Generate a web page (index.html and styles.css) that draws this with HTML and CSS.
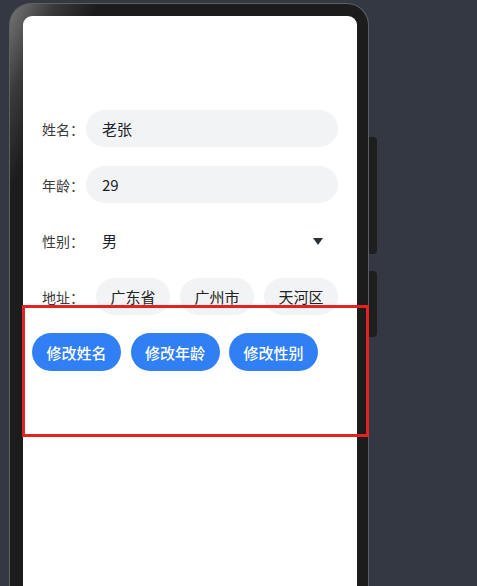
FILE: index.html
```html
<!DOCTYPE html>
<html lang="zh-CN">
<head>
    <meta charset="UTF-8">
    <meta name="viewport" content="width=device-width, initial-scale=1.0">
    <title>Profile</title>
    <link rel="stylesheet" href="styles.css">
</head>
<body>
    <div class="device">
        <div class="side-key key-top"></div>
        <div class="side-key key-bottom"></div>

        <div class="screen">
            <div class="form">
                <div class="row">
                    <span class="label">姓名：</span>
                    <div class="field">老张</div>
                </div>
                <div class="row">
                    <span class="label">年龄：</span>
                    <div class="field">29</div>
                </div>
                <div class="row">
                    <span class="label">性别：</span>
                    <div class="select">
                        <span>男</span>
                        <span class="arrow"></span>
                    </div>
                </div>
                <div class="row">
                    <span class="label">地址：</span>
                    <div class="chips">
                        <span class="chip">广东省</span>
                        <span class="chip">广州市</span>
                        <span class="chip">天河区</span>
                    </div>
                </div>
            </div>

            <div class="actions">
                <button type="button">修改姓名</button>
                <button type="button">修改年龄</button>
                <button type="button">修改性别</button>
            </div>
        </div>

        <div class="highlight"></div>
    </div>
</body>
</html>
```

FILE: styles.css
```css
body {
    margin: 0;
    height: 586px;
    overflow: hidden;
    background-color: #343843;
    font-family: "Noto Sans CJK SC", "Noto Sans", sans-serif;
}

.device {
    position: relative;
    width: 360px;
    height: 583px;
    margin: 3px 0 0 9px;
    padding: 12px 11px 0 13px;
    box-sizing: border-box;
    border: 1px solid #5d6067;
    border-bottom: none;
    border-radius: 22px 22px 0 0;
    background: linear-gradient(115deg, #777 0%, #3a3a3a 7%, #1c1c1c 14%);
}

.side-key {
    position: absolute;
    left: 359px;
    width: 8px;
    background-color: #1e1e1e;
    border-radius: 0 4px 4px 0;
}

.key-top {
    top: 133px;
    height: 117px;
}

.key-bottom {
    top: 267px;
    height: 66px;
}

.screen {
    height: 100%;
    background-color: #fff;
    border-radius: 9px 9px 0 0;
    padding-top: 94px;
    box-sizing: border-box;
}

.form {
    display: flex;
    flex-direction: column;
    gap: 19px;
    padding: 0 19px;
}

.row {
    display: flex;
    align-items: center;
    height: 37px;
}

.label {
    width: 44px;
    flex-shrink: 0;
    font-size: 14px;
    color: #3a3a3a;
}

.field {
    flex: 1;
    height: 37px;
    line-height: 37px;
    padding: 0 16px;
    border-radius: 19px;
    background-color: #f1f3f5;
    font-size: 15px;
    color: #1d2129;
}

.select {
    flex: 1;
    display: flex;
    align-items: center;
    justify-content: space-between;
    padding: 0 15px 0 16px;
    font-size: 15px;
    color: #1d2129;
}

.arrow {
    width: 0;
    height: 0;
    margin-top: 1px;
    border-left: 5px solid transparent;
    border-right: 5px solid transparent;
    border-top: 7px solid #2b303b;
}

.chips {
    display: flex;
    gap: 10px;
    margin-left: 10px;
}

.chip {
    width: 74px;
    height: 37px;
    line-height: 37px;
    text-align: center;
    border-radius: 19px;
    background-color: #f1f3f5;
    font-size: 15px;
    color: #222;
}

.actions {
    display: flex;
    gap: 9.5px;
    margin-top: 18px;
    padding-left: 9px;
}

.actions button {
    width: 89px;
    height: 38px;
    padding: 0;
    border: none;
    border-radius: 19px;
    background-color: #317ff5;
    color: #fff;
    font-family: inherit;
    font-size: 15px;
    font-weight: 500;
    cursor: pointer;
}

.highlight {
    position: absolute;
    left: 12px;
    top: 301px;
    width: 347px;
    height: 132px;
    box-sizing: border-box;
    border: 3px solid #e42222;
}
```
